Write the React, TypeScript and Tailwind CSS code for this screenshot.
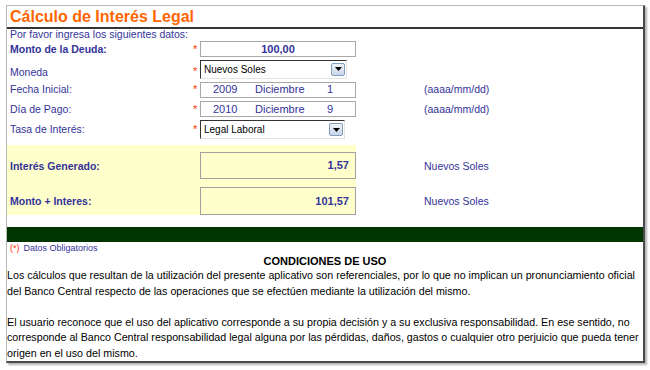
import React from "react";

const labelCls = "w-[185px] pl-[3px] text-[10.5px] text-[#333399]";
const star = <span className="w-[8px] text-[#ff3300] text-[11px] leading-none pl-[1px]">*</span>;

function DropButton() {
  return (
    <div className="w-[14px] h-[13px] mr-[1px] rounded-[2px] border border-[#7f9db9] bg-gradient-to-b from-[#f0f4fb] to-[#c9d5ea] flex items-center justify-center">
      <svg width="7" height="4" viewBox="0 0 7 4">
        <path d="M0 0 H7 L3.5 4 Z" fill="#000" />
      </svg>
    </div>
  );
}

function Select({ value, width }: { value: string; width: string }) {
  return (
    <div className={`${width} h-[19px] border-t border-l border-[#333] border-r border-b border-r-[#e4e4e4] border-b-[#e4e4e4] bg-white flex items-center justify-between`}>
      <span className="pl-[3px] text-[10px] text-black">{value}</span>
      <DropButton />
    </div>
  );
}

function DateBox({ y, m, d }: { y: string; m: string; d: string }) {
  return (
    <div className="w-[156px] h-[16px] border border-[#a8a8a8] flex items-center text-[11px] text-[#333399]">
      <span className="w-[54px] pl-[12px]">{y}</span>
      <span className="w-[72px]">{m}</span>
      <span>{d}</span>
    </div>
  );
}

export default function App() {
  return (
    <div className="w-[650px] h-[370px] bg-white overflow-hidden font-['Liberation_Sans',Arial,sans-serif]">
      <div className="ml-[6px] mt-[5px] w-[639px] h-[358px] border-l border-t border-[#b8b8b8] border-r-2 border-b-2 border-r-[#4a4a4a] border-b-[#4a4a4a] shadow-[2px_2px_2px_rgba(0,0,0,0.3)] flex flex-col">
        <div className="h-[21px] pl-[3px] text-[16px] leading-[22px] font-bold text-[#ff6600]">Cálculo de Interés Legal</div>
        <div className="h-[2px] bg-[#333]" />
        <div className="h-[11px] pl-[3px] text-[10.5px] leading-[11px] text-[#333399]">Por favor ingresa los siguientes datos:</div>

        <div className="h-[19px] flex items-center">
          <div className={`${labelCls} font-bold`}>Monto de la Deuda:</div>
          {star}
          <div className="w-[156px] h-[16px] border border-[#a8a8a8] text-center text-[11px] leading-[14px] font-bold text-[#333399]">100,00</div>
        </div>

        <div className="h-[21px] flex items-center">
          <div className={`${labelCls} pt-[7px]`}>Moneda</div>
          <span className="w-[8px] text-[#ff3300] text-[11px] leading-none pl-[1px] pt-[4px]">*</span>
          <Select value="Nuevos Soles" width="w-[147px]" />
        </div>

        <div className="h-[20px] flex items-center">
          <div className={labelCls}>Fecha Inicial:</div>
          {star}
          <DateBox y="2009" m="Diciembre" d="1" />
          <div className="ml-[68px] text-[10.5px] text-[#333399]">(aaaa/mm/dd)</div>
        </div>

        <div className="h-[20px] flex items-center">
          <div className={labelCls}>Día de Pago:</div>
          {star}
          <DateBox y="2010" m="Diciembre" d="9" />
          <div className="ml-[68px] text-[10.5px] text-[#333399]">(aaaa/mm/dd)</div>
        </div>

        <div className="h-[21px] flex items-center">
          <div className={labelCls}>Tasa de Interés:</div>
          {star}
          <Select value="Legal Laboral" width="w-[145px]" />
        </div>

        <div className="h-[5px]" />

        <div className="h-[36px] flex">
          <div className="w-[349px] bg-[#ffffcc] flex">
            <div className={`${labelCls} font-bold pt-[14px]`}>Interés Generado:</div>
            <div className="w-[8px]" />
            <div className="mt-[7px] w-[156px] h-[27px] border border-[#a0a0a0] text-right pr-[6px] text-[11px] leading-[25px] font-bold text-[#333399]">1,57</div>
          </div>
          <div className="ml-[68px] pt-[14px] text-[10.5px] text-[#333399]">Nuevos Soles</div>
        </div>

        <div className="h-[35px] flex">
          <div className="w-[349px] bg-[#ffffcc] flex">
            <div className={`${labelCls} font-bold pt-[13px]`}>Monto + Interes:</div>
            <div className="w-[8px]" />
            <div className="mt-[6px] w-[156px] h-[28px] border border-[#a0a0a0] text-right pr-[6px] text-[11px] leading-[26px] font-bold text-[#333399]">101,57</div>
          </div>
          <div className="ml-[68px] pt-[13px] text-[10.5px] text-[#333399]">Nuevos Soles</div>
        </div>

        <div className="h-[12px]" />
        <div className="h-[15px] bg-[#013601]" />

        <div className="h-[13px] pl-[3px] text-[9px] leading-[13px]">
          <span className="text-[#ff3300]">(*)</span>
          <span className="text-[#333399] ml-[4px]">Datos Obligatorios</span>
        </div>
        <div className="h-[13px] text-center text-[11px] leading-[13px] font-bold text-black">CONDICIONES DE USO</div>
        <div className="text-[10.7px] leading-[15.5px] text-black whitespace-nowrap">
          Los cálculos que resultan de la utilización del presente aplicativo son referenciales, por lo que no implican un pronunciamiento oficial
          <br />
          del Banco Central respecto de las operaciones que se efectúen mediante la utilización del mismo.
          <br />
          <br />
          El usuario reconoce que el uso del aplicativo corresponde a su propia decisión y a su exclusiva responsabilidad. En ese sentido, no
          <br />
          corresponde al Banco Central responsabilidad legal alguna por las pérdidas, daños, gastos o cualquier otro perjuicio que pueda tener
          <br />
          origen en el uso del mismo.
        </div>
      </div>
    </div>
  );
}
